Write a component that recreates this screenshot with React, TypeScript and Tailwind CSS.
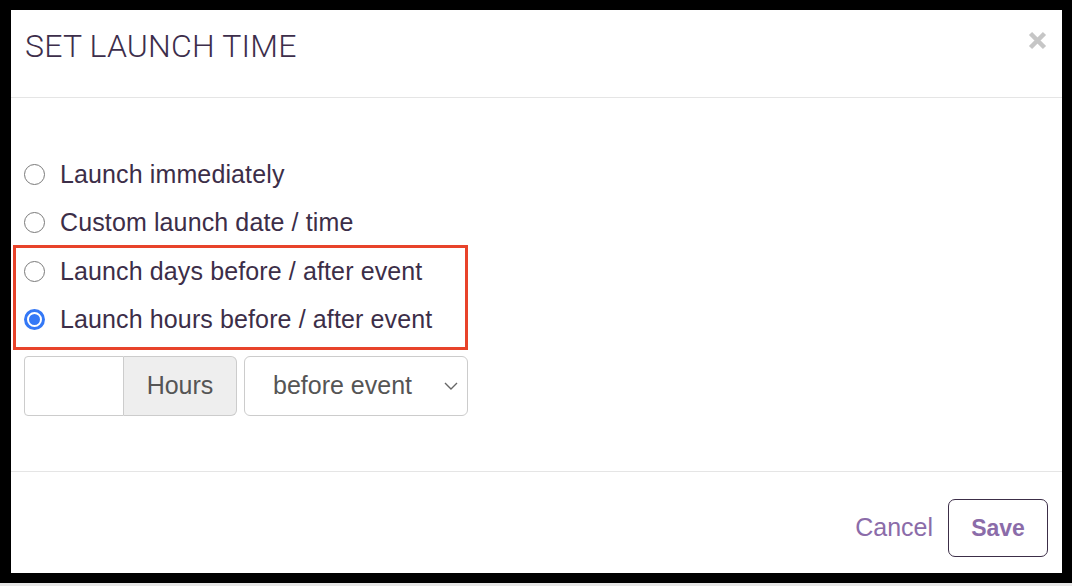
import React, { useState } from 'react';

type Option = { id: string; label: string };

const options: Option[] = [
    { id: 'now', label: 'Launch immediately' },
    { id: 'custom', label: 'Custom launch date / time' },
    { id: 'days', label: 'Launch days before / after event' },
    { id: 'hours', label: 'Launch hours before / after event' },
];

const Radio: React.FC<{ checked: boolean }> = ({ checked }) =>
    checked ? (
        <span className="w-[21px] h-[21px] rounded-full bg-[#3478f6] flex items-center justify-center shrink-0">
            <span className="w-[15px] h-[15px] rounded-full bg-[#3478f6] border-[2px] border-white" />
        </span>
    ) : (
        <span className="w-[21px] h-[21px] rounded-full border border-[#7a7a7a] bg-white shrink-0" />
    );

const App: React.FC = () => {
    const [selected, setSelected] = useState('hours');

    return (
        <div className="relative w-[1072px] h-[586px] bg-black flex flex-col font-['Liberation_Sans',Arial,sans-serif]">
            <div className="pt-[10px] pl-[11px]">
                <div className="w-[1051px] h-[563px] bg-white flex flex-col">
                    {/* Header */}
                    <div className="h-[88px] border-b border-[#e5e5e5] flex items-start justify-between pl-[14px] pr-[14px] pt-[18px]">
                        <h1 className="font-['Roboto',sans-serif] font-light text-[32px] tracking-[0.2px] leading-[37px] text-[#3d2e4b]">
                            SET LAUNCH TIME
                        </h1>
                        <button className="mt-[2px] w-[21px] h-[21px]">
                            <svg viewBox="0 0 21 21" width="21" height="21">
                                <path d="M3.5 3.5 L17.5 17.5 M17.5 3.5 L3.5 17.5" stroke="#c6c6c6" strokeWidth="4.5" />
                            </svg>
                        </button>
                    </div>

                    {/* Body */}
                    <div className="h-[373px] pl-[13px] pt-[52px] text-[25px] text-[#3c2e48]">
                        {options.map((o) => (
                            <label key={o.id} onClick={() => setSelected(o.id)}
                                className="h-[48.5px] flex items-center gap-[15px] cursor-pointer">
                                <Radio checked={selected === o.id} />
                                <span className="leading-none tracking-[0.12px]">{o.label}</span>
                            </label>
                        ))}
                        <div className="mt-[12px] flex h-[60px]">
                            <input className="w-[100px] h-full border border-[#cccccc] rounded-l-[4px] outline-none px-3" />
                            <span className="w-[113px] h-full bg-[#eeeeee] border border-l-0 border-[#cccccc] rounded-r-[6px] flex items-center justify-center text-[#555555]">
                                Hours
                            </span>
                            <div className="ml-[7px] w-[224px] h-full border border-[#cccccc] rounded-[6px] flex items-center justify-between pl-[28px] pr-[9px] text-[#555555]">
                                <span>before event</span>
                                <svg viewBox="0 0 14 8" width="14" height="8">
                                    <path d="M1 1 L7 7 L13 1" fill="none" stroke="#666666" strokeWidth="1.4" />
                                </svg>
                            </div>
                        </div>
                    </div>

                    {/* Footer */}
                    <div className="flex-1 border-t border-[#e5e5e5] flex items-start justify-end pr-[14px] pt-[27px]">
                        <div className="flex items-center gap-[15px]">
                            <button className="text-[25px] text-[#8b6ca9]">Cancel</button>
                            <button className="w-[100px] h-[58px] border border-[#3c2e48] rounded-[7px] text-[23px] font-bold text-[#8b6ca9]">
                                Save
                            </button>
                        </div>
                    </div>
                </div>
            </div>
            <div className="h-[10px]" />
            <div className="h-[3px] bg-[#e6e6e6]" />

            {/* annotation highlight */}
            <div className="absolute left-[13px] top-[245px] w-[455px] h-[105px] border-[3px] border-[#e8432a] pointer-events-none" />
        </div>
    );
};

export default App;
